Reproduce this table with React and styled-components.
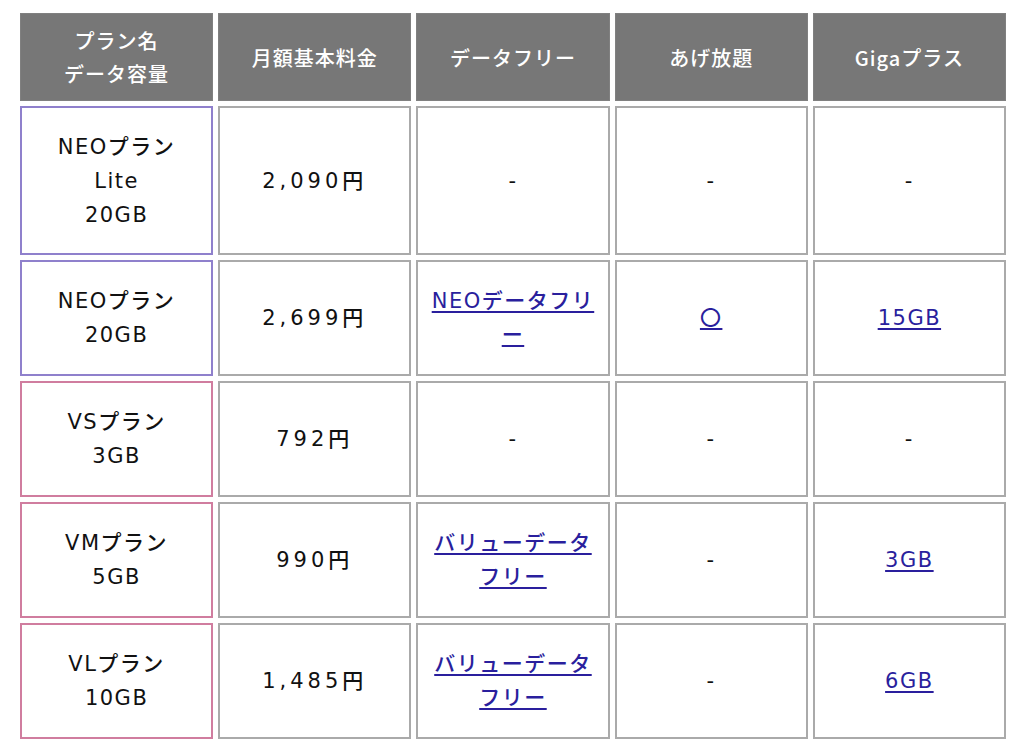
import styled, { createGlobalStyle } from "styled-components";

const GlobalStyle = createGlobalStyle`
  body {
    margin: 8px 0 0 0;
    background: #fff;
    font-family: "DejaVu Sans", "Noto Sans CJK JP", sans-serif;
  }
`;

const plans = [
  { name: ["NEOプラン", "Lite", "20GB"], price: "2,090円", free: null, age: null, giga: null, tone: "neo", tall: true },
  { name: ["NEOプラン", "20GB"], price: "2,699円", free: "NEOデータフリー", age: "〇", giga: "15GB", tone: "neo" },
  { name: ["VSプラン", "3GB"], price: "792円", free: null, age: null, giga: null, tone: "v" },
  { name: ["VMプラン", "5GB"], price: "990円", free: "バリューデータフリー", age: null, giga: "3GB", tone: "v" },
  { name: ["VLプラン", "10GB"], price: "1,485円", free: "バリューデータフリー", age: null, giga: "6GB", tone: "v" },
];

const toneColor = {
  neo: "#8f80cc",
  v: "#d07d9f",
};

function Value({ text }) {
  if (!text) return "-";
  return <PlanLink href="#">{text}</PlanLink>;
}

export default function App() {
  return (
    <>
      <GlobalStyle />
      <Table>
        <thead>
          <tr>
            <HeadCell>プラン名<br />データ容量</HeadCell>
            <HeadCell>月額基本料金</HeadCell>
            <HeadCell>データフリー</HeadCell>
            <HeadCell>あげ放題</HeadCell>
            <HeadCell>Gigaプラス</HeadCell>
          </tr>
        </thead>
        <tbody>
          {plans.map((p, i) => (
            <Row key={i} $tall={p.tall}>
              <NameCell $tone={p.tone}>
                {p.name.map((line, j) => (
                  <span key={j}>{line}{j < p.name.length - 1 && <br />}</span>
                ))}
              </NameCell>
              <PriceCell>{p.price}</PriceCell>
              <Cell><Value text={p.free} /></Cell>
              <Cell><Value text={p.age} /></Cell>
              <Cell><Value text={p.giga} /></Cell>
            </Row>
          ))}
        </tbody>
      </Table>
    </>
  );
}

const Table = styled.table`
  margin-left: 15px;
  width: 996px;
  table-layout: fixed;
  border-collapse: separate;
  border-spacing: 5px;
  font-size: 21px;
  line-height: 34px;
  letter-spacing: 1.5px;
  font-weight: 500;
  color: #111;
  text-align: center;
`;

const HeadCell = styled.th`
  height: 86px;
  padding: 0 6px;
  background: #777;
  color: #fff;
  font-family: "Noto Sans CJK JP", sans-serif;
  font-weight: 500;
  font-size: 20px;
  border: 1px solid #808080;
  line-height: 33px;
  letter-spacing: 1px;
`;

const Row = styled.tr`
  height: ${(p) => (p.$tall ? "149px" : "116px")};
`;

const Cell = styled.td`
  padding: 2px 8px;
  border: 2px solid #aaa;
  vertical-align: middle;
`;

const NameCell = styled(Cell)`
  border-color: ${(p) => toneColor[p.$tone]};
`;

const PriceCell = styled(Cell)`
  letter-spacing: 4px;
`;

const PlanLink = styled.a`
  color: #2a1f9d;
  text-decoration: underline;
  text-underline-offset: 3px;
`;
